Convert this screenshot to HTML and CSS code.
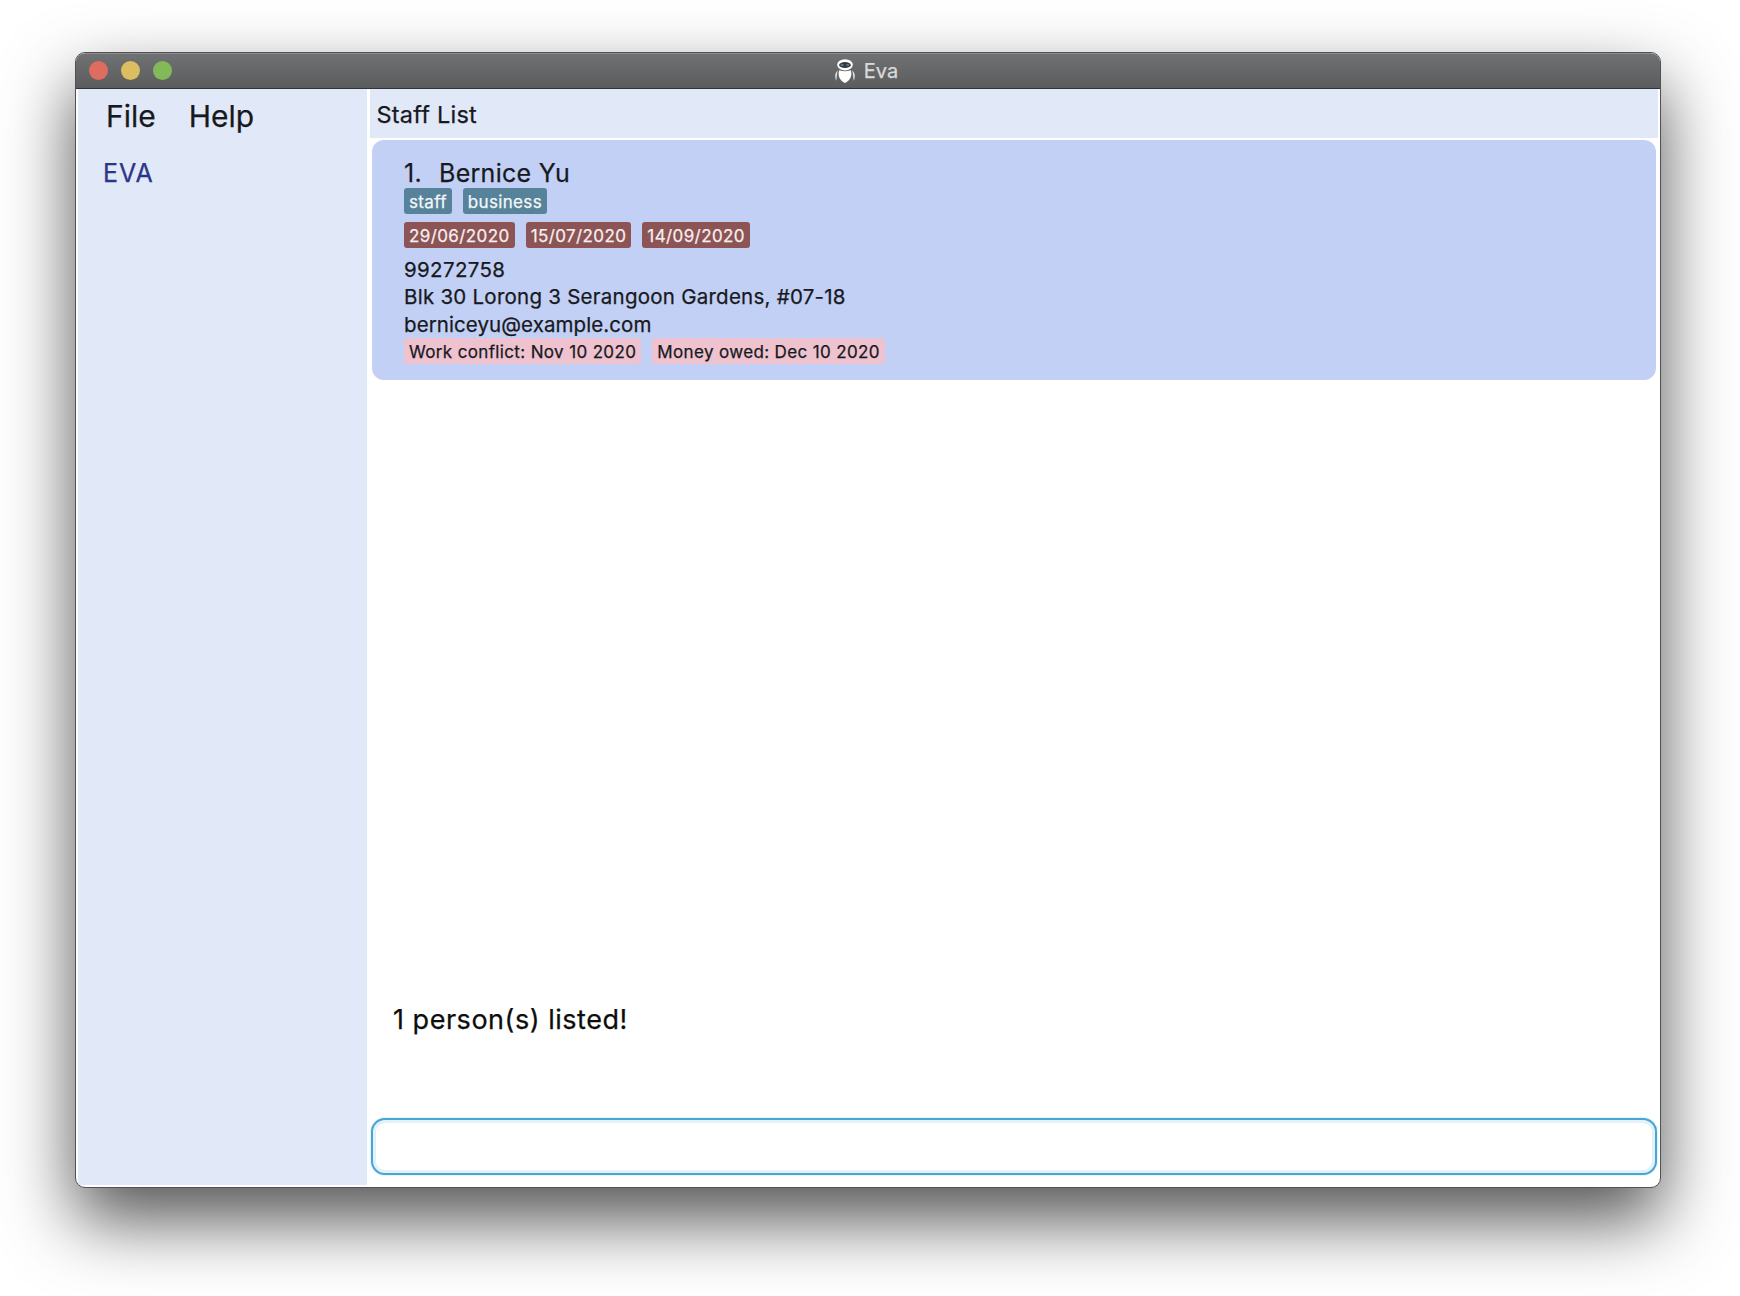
FILE: index.html
```html
<!DOCTYPE html>
<html lang="en">
<head>
<meta charset="utf-8">
<title>Eva</title>
<link rel="stylesheet" href="styles.css">
</head>
<body>
<div class="window">
  <header class="titlebar">
    <div class="lights"><i class="light red"></i><i class="light yellow"></i><i class="light green"></i></div>
    <div class="title">
      <svg class="logo" viewBox="0 0 20 24" width="20" height="24">
        <ellipse cx="10" cy="5.800" rx="7.800" ry="5.600" fill="#fff"/>
        <ellipse cx="10" cy="6" rx="5.900" ry="3" fill="#33393f"/>
        <ellipse cx="7.200" cy="6" rx="1.700" ry="1.100" fill="#61788c"/>
        <ellipse cx="12.800" cy="6" rx="1.700" ry="1.100" fill="#61788c"/>
        <path d="M4.200 11.300Q10 13 15.800 11.300C17.600 17 15.200 21.500 10 24C4.800 21.500 2.400 17 4.200 11.300Z" fill="#fff"/>
        <path d="M2.800 11.500C-.4 14 -.2 18.500 1.200 21.800C2 18 1.600 15 2.800 11.500ZM17.200 11.500C20.400 14 20.200 18.500 18.800 21.800C18 18 18.400 15 17.200 11.500Z" fill="#e8e8e8"/>
      </svg>
      <span>Eva</span>
    </div>
  </header>
  <div class="content">
    <aside class="sidebar">
      <nav class="menu"><span>File</span><span>Help</span></nav>
      <div class="eva">EVA</div>
    </aside>
    <main class="main">
      <h1 class="heading">Staff List</h1>
      <section class="card">
        <h2 class="name"><span class="index">1.</span><span>Bernice Yu</span></h2>
        <div class="tags roles"><span class="tag">staff</span><span class="tag">business</span></div>
        <div class="tags leaves"><span class="tag">29/06/2020</span><span class="tag">15/07/2020</span><span class="tag">14/09/2020</span></div>
        <p class="line phone">99272758</p>
        <p class="line address">Blk 30 Lorong 3 Serangoon Gardens, #07-18</p>
        <p class="line email">berniceyu@example.com</p>
        <div class="tags comments"><span class="tag">Work conflict: Nov 10 2020</span><span class="tag">Money owed: Dec 10 2020</span></div>
      </section>
      <p class="result">1 person(s) listed!</p>
      <input class="command" type="text" aria-label="Command">
    </main>
  </div>
</div>
</body>
</html>
```
FILE: styles.css
```css
* { box-sizing: border-box; }
body { margin: 0; width: 1740px; height: 1296px; padding: 52px 79px 0 75px; overflow: hidden; background: #fff; color: #17191d; font-family: Inter, "Liberation Sans", sans-serif; -webkit-text-stroke: .25px currentColor; }
h1, h2, p { margin: 0; font-weight: 400; }
.window { display: flex; flex-direction: column; width: 1586px; height: 1136px; overflow: hidden; border: 1px solid #505153; border-radius: 10px; background: #fff; box-shadow: 0 32px 70px rgba(0, 0, 0, .68); }
.titlebar { display: grid; grid-template-columns: 1fr auto 1fr; align-items: center; height: 36px; padding: 0 14px 0 13px; border-top: 1px solid #8b8d8e; border-bottom: 1px solid #333; background: linear-gradient(#6f7172, #5b5c5e); }
.lights { display: flex; gap: 13px; margin-top: -1px; }
.light { width: 19px; height: 19px; border-radius: 50%; }
.red { background: #df6c60; }
.yellow { background: #dcbd60; }
.green { background: #83b959; }
.title { display: flex; align-items: center; gap: 9px; margin-right: 2px; color: #d9dadb; font-size: 20px; line-height: 24px; }
.logo { display: block; }
.content { display: flex; flex: 1; padding: 0 2px 2px; }
.sidebar { width: 289px; background: #e1e8f8; }
.menu { display: flex; gap: 33px; padding: 9px 0 0 28px; font-size: 30px; line-height: 37px; }
.eva { padding: 22px 0 0 25px; color: #2b3587; font-size: 25px; letter-spacing: 1px; line-height: 32px; }
.main { display: flex; flex: 1; flex-direction: column; margin-left: 3px; }
.heading { height: 49px; padding-left: 6.5px; background: #e1e8f8; font-size: 23.5px; letter-spacing: .22px; line-height: 52px; }
.card { height: 240px; margin: 2px 2px 0; padding: 16px 32px; border-radius: 12px; background: #c3d0f5; }
.name { display: flex; height: 32px; font-size: 25px; letter-spacing: .28px; line-height: 34px; }
.index { width: 35px; }
.tags { display: flex; gap: 11px; }
.tag { height: 26px; padding: 0 5px; border-radius: 3px; font-size: 17px; letter-spacing: .34px; line-height: 28px; }
.roles .tag { background: #57839a; color: #f4f7f9; }
.leaves { margin: 8px 0; }
.leaves .tag { background: #8c5454; color: #f6efef; letter-spacing: .4px; }
.comments .tag { background: #eec2cf; letter-spacing: .36px; }
.line { font-size: 20.5px; line-height: 27.4px; }
.phone { letter-spacing: .35px; }
.address { letter-spacing: .25px; }
.email { letter-spacing: .08px; }
.result { margin-top: 622px; padding-left: 23px; color: #0d0d0d; font-size: 27px; letter-spacing: .52px; line-height: 36px; }
.command { height: 57px; margin: auto 1px 10px; border: 2px solid #49a5d4; border-radius: 14px; outline: none; background: #fff; box-shadow: 0 0 2px #9fd0e8, inset 0 0 0 3px #e2f2f8; }
```
